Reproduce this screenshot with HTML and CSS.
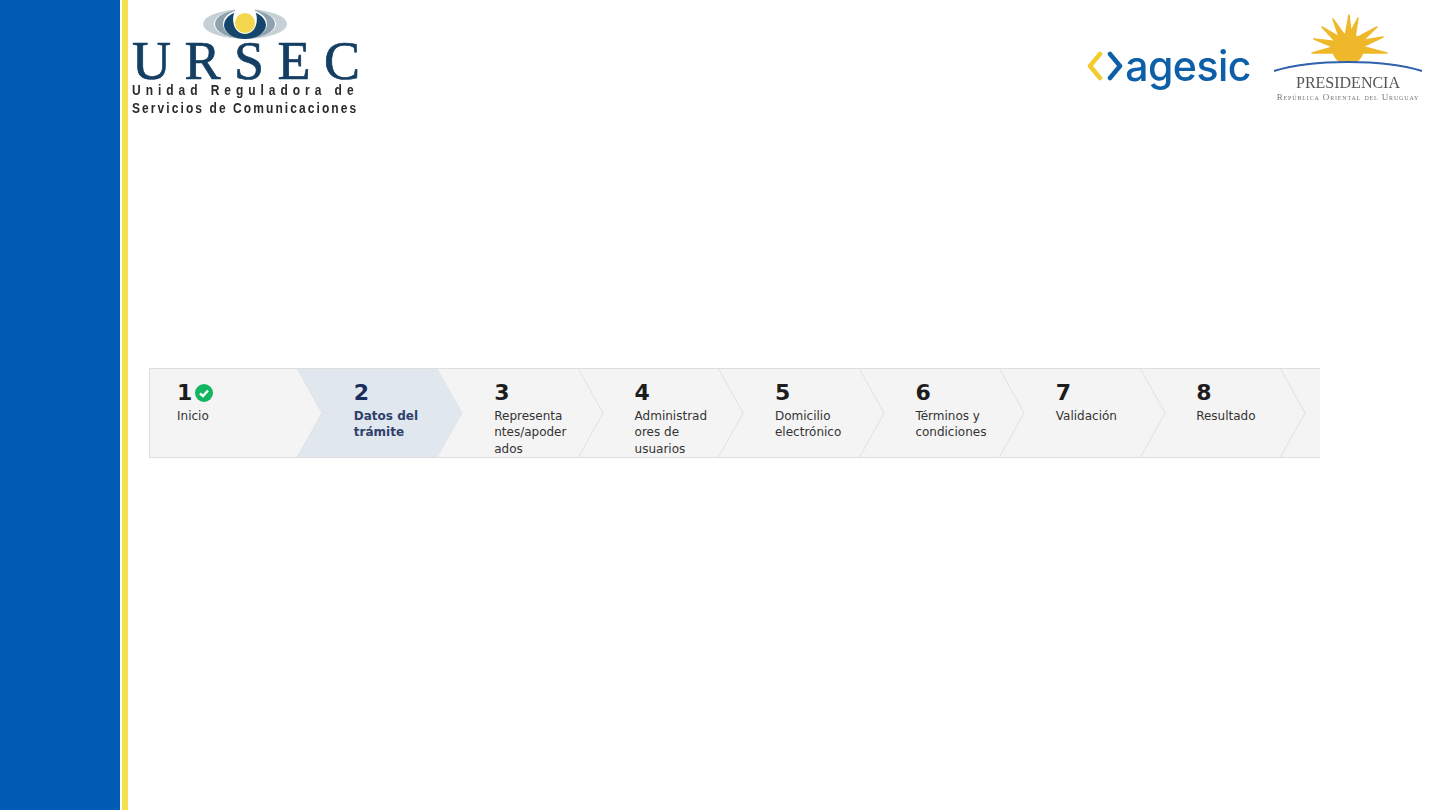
FILE: index.html
```html
<!DOCTYPE html>
<html lang="en">
<head>
    <meta charset="UTF-8">
    <meta name="viewport" content="width=device-width, initial-scale=1.0">
    <title>Datos del trámite</title>
    <link rel="stylesheet" href="styles.css">
</head>
<body>
    <div class="page">
        <div class="side"></div>
        <div class="stripe"></div>
        <div class="main">
            <div class="header">
                <div class="ursec">
                    <svg class="ursec-mark" width="90" height="32" viewBox="0 0 90 32">
                        <ellipse cx="45" cy="15" rx="42" ry="15" fill="#c5d1d7"/>
                        <ellipse cx="45" cy="15" rx="31" ry="15" fill="#fff"/>
                        <ellipse cx="45" cy="15" rx="30" ry="15" fill="#8da2ad"/>
                        <ellipse cx="45" cy="15" rx="22" ry="15" fill="#fff"/>
                        <ellipse cx="45" cy="16" rx="21" ry="14" fill="#14466b"/>
                        <path d="M35 0 L55 0 L55 2 C59 10 57 24 45 25 C33 24 31 10 35 2 Z" fill="#fff"/>
                        <circle cx="45" cy="14" r="10" fill="#f3d84f"/>
                    </svg>
                    <div class="ursec-name">URSEC</div>
                    <div class="ursec-sub wide">Unidad Reguladora de</div>
                    <div class="ursec-sub">Servicios de Comunicaciones</div>
                </div>
                <div class="partners">
                    <div class="agesic">
                        <svg width="36" height="30" viewBox="0 0 36 30">
                            <path d="M13 3 L3 15 L13 27" fill="none" stroke="#f2cc2e" stroke-width="4.5" stroke-linejoin="round" stroke-linecap="round"/>
                            <path d="M23 3 L33 15 L23 27" fill="none" stroke="#0d5fa8" stroke-width="4.5" stroke-linejoin="round" stroke-linecap="round"/>
                        </svg>
                        <span>agesic</span>
                    </div>
                    <div class="presidencia">
                        <svg width="150" height="60" viewBox="0 0 150 60">
                            <g fill="#efb82a" stroke="#efb82a" stroke-width="1.5" stroke-linejoin="round">
                                <path d="M76 2 L70 35 L80 35 Z"/>
                                <path d="M60 6 L79.5 33 L70.5 37 Z"/>
                                <path d="M49 14 L78 31 L72 39 Z"/>
                                <path d="M41 26 L76 30 L74 40 Z"/>
                                <path d="M39 40 L74 30 L76 40 Z"/>
                                <path d="M85 5 L80 37 L70 33 Z"/>
                                <path d="M104 14 L78 39 L72 31 Z"/>
                                <path d="M110 24 L76.5 40 L73.5 30 Z"/>
                                <path d="M114 40 L74 40 L76 30 Z"/>
                                <circle cx="75" cy="36" r="15"/>
                            </g>
                            <path d="M0 60 L0 58 C40 46 110 46 150 58 L150 60 Z" fill="#fff"/>
                            <path d="M1 58 C40 46 110 46 149 58" fill="none" stroke="#2f62ad" stroke-width="2"/>
                        </svg>
                        <div class="pres-name">PRESIDENCIA</div>
                        <div class="pres-sub">República Oriental del Uruguay</div>
                    </div>
                </div>
            </div>

            <div class="wizard">
                <div class="step first">
                    <div class="num">1<svg class="check" width="18" height="18" viewBox="0 0 18 18"><circle cx="9" cy="9" r="9" fill="#12b560"/><path d="M5 9.5 L8 12 L13 6.5" fill="none" stroke="#fff" stroke-width="2.4"/></svg></div>
                    <div class="label">Inicio</div>
                    <svg class="arrow" width="26" height="90" viewBox="0 0 26 90"><path d="M0 0 L25 45 L0 90" fill="none" stroke="#e0e0e0"/></svg>
                </div>
                <div class="step active">
                    <div class="num">2</div>
                    <div class="label">Datos del<br>trámite</div>
                </div>
                <div class="step">
                    <div class="num">3</div>
                    <div class="label">Representa<br>ntes/apoder<br>ados</div>
                    <svg class="arrow" width="26" height="90" viewBox="0 0 26 90"><path d="M0 0 L25 45 L0 90" fill="none" stroke="#e0e0e0"/></svg>
                </div>
                <div class="step">
                    <div class="num">4</div>
                    <div class="label">Administrad<br>ores de<br>usuarios</div>
                    <svg class="arrow" width="26" height="90" viewBox="0 0 26 90"><path d="M0 0 L25 45 L0 90" fill="none" stroke="#e0e0e0"/></svg>
                </div>
                <div class="step">
                    <div class="num">5</div>
                    <div class="label">Domicilio<br>electrónico</div>
                    <svg class="arrow" width="26" height="90" viewBox="0 0 26 90"><path d="M0 0 L25 45 L0 90" fill="none" stroke="#e0e0e0"/></svg>
                </div>
                <div class="step">
                    <div class="num">6</div>
                    <div class="label">Términos y<br>condiciones</div>
                    <svg class="arrow" width="26" height="90" viewBox="0 0 26 90"><path d="M0 0 L25 45 L0 90" fill="none" stroke="#e0e0e0"/></svg>
                </div>
                <div class="step">
                    <div class="num">7</div>
                    <div class="label">Validación</div>
                    <svg class="arrow" width="26" height="90" viewBox="0 0 26 90"><path d="M0 0 L25 45 L0 90" fill="none" stroke="#e0e0e0"/></svg>
                </div>
                <div class="step">
                    <div class="num">8</div>
                    <div class="label">Resultado</div>
                    <svg class="arrow" width="26" height="90" viewBox="0 0 26 90"><path d="M0 0 L25 45 L0 90" fill="none" stroke="#e0e0e0"/></svg>
                </div>
            </div>
        </div>
    </div>
</body>
</html>
```

FILE: styles.css
```css
html, body {
    margin: 0;
    padding: 0;
    background: white;
}
.page {
    display: flex;
    height: 810px;
    overflow: hidden;
}
.side {
    width: 120px;
    flex: none;
    background: #015cb5;
}
.stripe {
    width: 6px;
    flex: none;
    margin-left: 2px;
    background: #f6e04f;
}
.main {
    flex: 1;
    min-width: 0;
}
.header {
    display: flex;
    justify-content: space-between;
    height: 368px;
    padding: 0 17px 0 4px;
}
.ursec {
    width: 230px;
    padding-top: 9px;
    filter: blur(0.4px);
}
.ursec-mark {
    display: block;
    margin-left: 68px;
}
.ursec-name {
    font-family: "Liberation Serif", serif;
    font-size: 54px;
    line-height: 38px;
    letter-spacing: 13.5px;
    color: #143f63;
    -webkit-text-stroke: 0.7px #143f63;
    white-space: nowrap;
    margin: 1px 0 1px;
}
.ursec-sub {
    font-family: "Liberation Sans", sans-serif;
    font-size: 15px;
    line-height: 18px;
    font-weight: bold;
    letter-spacing: 2.6px;
    color: #2a2a2a;
    white-space: nowrap;
    transform: scaleX(0.8);
    transform-origin: left;
}
.ursec-sub.wide {
    letter-spacing: 6.2px;
}
.partners {
    display: flex;
    align-items: flex-start;
    gap: 22px;
    filter: blur(0.4px);
}
.agesic {
    display: flex;
    align-items: center;
    gap: 2px;
    margin-top: 44px;
    font-family: "Inter", sans-serif;
    font-size: 41px;
    font-weight: 500;
    line-height: 44px;
    letter-spacing: -0.5px;
    color: #0d5fa8;
}
.presidencia {
    width: 150px;
    padding-top: 13px;
    text-align: center;
}
.presidencia svg {
    display: block;
}
.pres-name {
    font-family: "Liberation Serif", serif;
    font-size: 16px;
    line-height: 18px;
    color: #555;
    margin-top: 1px;
}
.pres-sub {
    font-family: "Liberation Serif", serif;
    font-size: 9px;
    line-height: 11px;
    font-variant: small-caps;
    letter-spacing: 0.85px;
    color: #777;
    white-space: nowrap;
}
.wizard {
    display: flex;
    width: 1170px;
    height: 88px;
    margin-left: 21px;
    background: #f4f4f4;
    border: 1px solid #dedede;
    border-right: none;
    overflow: hidden;
    font-family: "DejaVu Sans", sans-serif;
}
.step {
    flex: none;
    box-sizing: border-box;
    width: 140.4px;
    height: 88px;
    padding: 11px 0 0 56.5px;
    position: relative;
}
.step.first {
    width: 147.3px;
    padding-left: 27px;
}
.step.active {
    background: #e0e7ef;
    clip-path: polygon(0 0, 140.4px 0, 165.4px 44px, 140.4px 88px, 0 88px, 25px 44px);
    width: 166px;
    margin-right: -25.6px;
}
.num {
    font-size: 22px;
    line-height: 25px;
    font-weight: bold;
    color: #1d1d1d;
    display: flex;
    align-items: center;
    gap: 3px;
    margin-bottom: 3px;
}
.check {
    display: block;
}
.active .num {
    color: #1c2c5c;
}
.label {
    font-size: 12px;
    line-height: 16.4px;
    color: #333;
    white-space: nowrap;
}
.active .label {
    font-weight: bold;
    color: #2f3f6c;
}
.arrow {
    position: absolute;
    top: -1px;
    left: 140.4px;
    z-index: 1;
}
.first .arrow {
    left: 147.3px;
}
```
